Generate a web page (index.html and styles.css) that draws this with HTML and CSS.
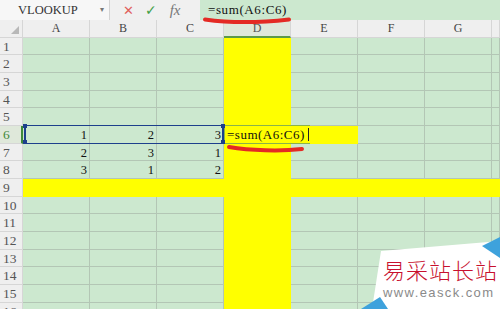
FILE: index.html
```html
<!DOCTYPE html>
<html lang="zh-CN">
<head>
    <meta charset="UTF-8">
    <title>VLOOKUP sum</title>
    <link rel="stylesheet" href="styles.css">
</head>
<body>
    <div class="formula-bar">
        <div class="name-box">VLOOKUP<span class="drop">&#9662;</span></div>
        <div class="tools">
            <span class="tool-x">&#10005;</span>
            <span class="tool-ok">&#10003;</span>
            <span class="tool-fx">fx</span>
        </div>
        <div class="formula-input">=sum(A6:C6)</div>
    </div>

    <div class="sheet" id="sheet"></div>

    <svg class="marks" width="500" height="309" viewBox="0 0 500 309">
        <path d="M205 19.5 C 230 23, 262 22.5, 289 19.5" />
        <path d="M229 147 C 250 150.5, 280 151.5, 302 149" />
    </svg>

    <div class="watermark">
        <svg class="wm-bg" width="140" height="75" viewBox="360 234 140 75">
            <polygon points="381,251 500,241 500,309 372,309" fill="#ffffff" />
            <polygon points="482,246 500,237 500,258" fill="#3ea2dc" />
            <polygon points="361,309 380,297 388,309" fill="#3ea2dc" />
        </svg>
        <div class="wm-text">
            <div class="wm-cn">易采站长站</div>
            <div class="wm-url">www.easck.com</div>
        </div>
    </div>

    <script>
        const cols = ['A', 'B', 'C', 'D', 'E', 'F', 'G', ''];
        const values = { 6: [1, 2, 3], 7: [2, 3, 1], 8: [3, 1, 2] };
        const sheet = document.getElementById('sheet');

        function cell(cls, row, col, text) {
            const div = document.createElement('div');
            div.className = cls;
            div.style.gridRow = row;
            div.style.gridColumn = col;
            if (text !== undefined) div.textContent = text;
            sheet.appendChild(div);
            return div;
        }

        // 表头
        cell('corner', 1, 1);
        cols.forEach((c, i) => cell(c === 'D' ? 'col-head active' : 'col-head', 1, i + 2, c));

        // 行
        for (let r = 1; r <= 16; r++) {
            cell(r === 6 ? 'row-head active' : 'row-head', r + 1, 1, r);
            cols.forEach((c, i) => {
                let cls = 'cell';
                if (c === 'D' || r === 9 || (r === 6 && c === 'E')) cls += ' fill';
                const v = values[r] && values[r][i];
                cell(cls, r + 1, i + 2, v);
            });
        }

        // 选区和编辑框
        cell('selection', 7, '2 / 5');
        const editor = cell('editor', 7, '5 / 7');
        editor.innerHTML = '=sum(A6:C6)<span class="caret"></span>';
    </script>
</body>
</html>
```

FILE: styles.css
```css
body {
    margin: 0;
    width: 500px;
    height: 309px;
    overflow: hidden;
    position: relative;
    background: #cce8cf;
    font-family: 'Liberation Serif', serif;
}

.formula-bar {
    display: flex;
    height: 20px;
    background: #f0f0f0;
}

.name-box {
    width: 110px;
    box-sizing: border-box;
    padding-left: 18px;
    background: #f7f7f7;
    border-right: 1px solid #d4d4d4;
    font-size: 12.5px;
    line-height: 20px;
    color: #333;
    display: flex;
}

.drop {
    margin-left: auto;
    margin-right: 5px;
    font-size: 8px;
    color: #777;
}

.tools {
    width: 90px;
    display: flex;
    align-items: center;
    gap: 11px;
    padding-left: 13px;
    box-sizing: border-box;
}

.tool-x { color: #e0605c; font-size: 13px; font-family: 'DejaVu Sans', sans-serif; }
.tool-ok { color: #43a047; font-size: 14px; font-family: 'DejaVu Sans', sans-serif; }
.tool-fx { color: #777; font-style: italic; font-size: 15px; margin-left: 2px; }

.formula-input {
    flex: 1;
    background: #cce8cf;
    padding-left: 8px;
    font-size: 13px;
    letter-spacing: 0.6px;
    line-height: 20px;
    color: #111;
}

.sheet {
    display: grid;
    grid-template-columns: 23px repeat(7, 67px) 1fr;
    grid-template-rows: 17.5px;
    grid-auto-rows: 17.7px;
    font-size: 12.5px;
}

.corner,
.col-head,
.row-head {
    background: #efefef;
    box-sizing: border-box;
    border-right: 1px solid #d6d6d6;
    border-bottom: 1px solid #d6d6d6;
    color: #444;
}

.corner { position: relative; }
.corner::after {
    content: '';
    position: absolute;
    right: 3px;
    bottom: 3px;
    border-left: 8px solid transparent;
    border-bottom: 8px solid #b8b8b8;
}

.col-head {
    text-align: center;
    line-height: 17px;
    font-size: 12px;
}

.col-head.active {
    background: #dfe8da;
    border-bottom: 2px solid #5c9a48;
    color: #555;
}

.row-head {
    padding-left: 3px;
    font-size: 13.5px;
    line-height: 18px;
    color: #555;
}

.row-head.active {
    background: #dfe8da;
    border-right: 2px solid #3f8a3a;
    color: #3f8a3a;
}

.cell {
    box-sizing: border-box;
    border-right: 1px solid #b3c6b5;
    border-bottom: 1px solid #b3c6b5;
    text-align: right;
    padding-right: 2px;
    line-height: 18px;
    color: #111;
}

.cell.fill {
    background: #ffff00;
    border-color: #ffff00;
}

.selection {
    border: 1px solid #1d3f8c;
    border-left-width: 2px;
    border-right-width: 2px;
    margin-left: 1px;
    margin-top: -1px;
    position: relative;
}

.selection::before,
.selection::after {
    content: '';
    position: absolute;
    top: -2px;
    width: 4px;
    height: 4px;
    background: #1d3f8c;
    box-shadow: 0 16px 0 #1d3f8c;
}

.selection::before { left: -3px; }
.selection::after { right: -3px; }

.editor {
    justify-self: start;
    margin-top: -1px;
    padding: 0 1px 0 2px;
    border: 1px solid #8bb24a;
    border-right: none;
    font-size: 13px;
    letter-spacing: 0.5px;
    line-height: 17px;
    color: #111;
    display: flex;
    align-items: center;
}

.caret {
    display: inline-block;
    width: 1px;
    height: 13px;
    margin-left: 3px;
    background: #222;
}

.marks {
    position: absolute;
    left: 0;
    top: 0;
    pointer-events: none;
}

.marks path {
    fill: none;
    stroke: #e42a24;
    stroke-width: 4;
    stroke-linecap: round;
}

.watermark {
    position: absolute;
    left: 360px;
    top: 234px;
    width: 140px;
    height: 75px;
}

.wm-bg {
    position: absolute;
    left: 0;
    top: 0;
}

.wm-text {
    position: absolute;
    left: 23px;
    top: 22px;
}

.wm-cn {
    font-family: 'Noto Sans CJK SC', sans-serif;
    font-weight: 300;
    font-size: 22px;
    line-height: 26px;
    letter-spacing: 1px;
    color: #c8102e;
    white-space: nowrap;
}

.wm-url {
    margin-top: 4px;
    font-family: 'Liberation Sans', sans-serif;
    font-size: 13px;
    line-height: 14px;
    letter-spacing: 1.4px;
    color: #8a8a8a;
    white-space: nowrap;
}
```
